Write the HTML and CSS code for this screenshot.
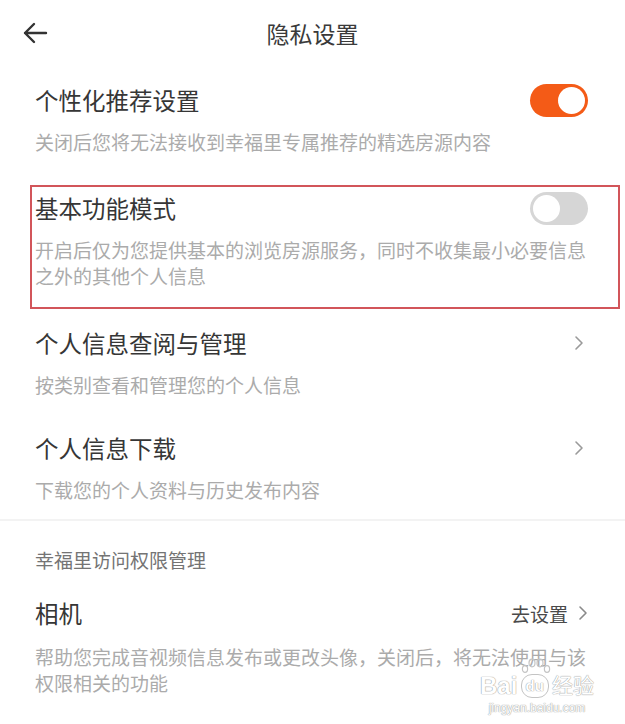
FILE: index.html
```html
<!DOCTYPE html>
<html lang="zh-CN">
<head>
    <meta charset="UTF-8">
    <meta name="viewport" content="width=device-width, initial-scale=1.0">
    <title>隐私设置</title>
    <link rel="stylesheet" href="styles.css">
</head>
<body>

    <!-- Top bar -->
    <div class="topbar">
        <svg class="back" width="26" height="22" viewBox="0 0 26 22">
            <path d="M24 11 H3 M12 2 L3 11 L12 20" fill="none" stroke="#333" stroke-width="2.4" stroke-linecap="round" stroke-linejoin="round"/>
        </svg>
        <div class="topbar-title">隐私设置</div>
    </div>

    <div class="list">
        <div class="item">
            <div class="item-head">
                <span class="item-title">个性化推荐设置</span>
                <span class="switch on"><span class="knob"></span></span>
            </div>
            <div class="item-desc">关闭后您将无法接收到幸福里专属推荐的精选房源内容</div>
        </div>

        <!-- Marked item -->
        <div class="item marked">
            <div class="item-head">
                <span class="item-title">基本功能模式</span>
                <span class="switch"><span class="knob"></span></span>
            </div>
            <div class="item-desc">开启后仅为您提供基本的浏览房源服务，同时不收集最小必要信息之外的其他个人信息</div>
        </div>

        <div class="item">
            <div class="item-head">
                <span class="item-title">个人信息查阅与管理</span>
                <svg class="chevron" width="10" height="16" viewBox="0 0 10 16"><path d="M2 2 L8 8 L2 14" fill="none" stroke="#9a9a9a" stroke-width="1.6" stroke-linecap="round" stroke-linejoin="round"/></svg>
            </div>
            <div class="item-desc">按类别查看和管理您的个人信息</div>
        </div>

        <div class="item">
            <div class="item-head">
                <span class="item-title">个人信息下载</span>
                <svg class="chevron" width="10" height="16" viewBox="0 0 10 16"><path d="M2 2 L8 8 L2 14" fill="none" stroke="#9a9a9a" stroke-width="1.6" stroke-linecap="round" stroke-linejoin="round"/></svg>
            </div>
            <div class="item-desc">下载您的个人资料与历史发布内容</div>
        </div>
    </div>

    <div class="divider"></div>

    <div class="list">
        <div class="group-title">幸福里访问权限管理</div>
        <div class="item perm">
            <div class="item-head">
                <span class="item-title">相机</span>
                <span class="action">去设置
                    <svg class="chevron" width="10" height="16" viewBox="0 0 10 16"><path d="M2 2 L8 8 L2 14" fill="none" stroke="#8a8a8a" stroke-width="1.6" stroke-linecap="round" stroke-linejoin="round"/></svg>
                </span>
            </div>
            <div class="item-desc">帮助您完成音视频信息发布或更改头像，关闭后，将无法使用与该权限相关的功能</div>
        </div>
    </div>

    <!-- Watermark -->
    <div class="watermark">
        <div class="wm-logo">
            <span>Bai</span>
            <span class="wm-du">
                <svg class="toes" width="30" height="16" viewBox="0 0 30 16" fill="none" stroke="#c4c4c4" stroke-width="1.2">
                    <ellipse cx="4" cy="11" rx="2.6" ry="3.4"/>
                    <ellipse cx="11" cy="5" rx="3" ry="3.8"/>
                    <ellipse cx="19" cy="5" rx="3" ry="3.8"/>
                    <ellipse cx="26" cy="11" rx="2.6" ry="3.4"/>
                </svg>
                du
            </span>
            <span class="wm-cn">经验</span>
        </div>
        <div class="wm-url">jingyan.baidu.com</div>
    </div>

</body>
</html>
```

FILE: styles.css
```css
body {
    margin: 0;
    padding: 0;
    background-color: #fff;
    font-family: "Noto Sans CJK SC", "Noto Sans", sans-serif;
    color: #333;
    position: relative;
    width: 625px;
    height: 724px;
    overflow: hidden;
}

/* Top bar */
.topbar {
    height: 66px;
    display: flex;
    align-items: center;
    justify-content: center;
    position: relative;
}

.back {
    position: absolute;
    left: 22px;
    top: 22px;
}

.topbar-title {
    font-size: 23px;
    line-height: 34px;
    color: #3a3a3a;
}

/* Items */
.item {
    padding: 17px 37px 16px 35px;
}

.item-head {
    display: flex;
    align-items: center;
    justify-content: space-between;
    height: 34px;
}

.item-title {
    font-size: 23.5px;
    line-height: 34px;
    color: #363636;
}

.item-desc {
    margin-top: 12px;
    font-size: 19px;
    line-height: 26px;
    color: #ababab;
}

.item.marked {
    margin: 14px 5px 0 30px;
    padding: 4px 30px 18px 3px;
    border: 2px solid #d2555a;
}

.chevron {
    margin-right: 4px;
}

/* Switch */
.switch {
    width: 58px;
    height: 33px;
    border-radius: 17px;
    background-color: #d6d6d6;
    display: flex;
    align-items: center;
    padding: 0 3px;
    box-sizing: border-box;
}

.switch .knob {
    width: 27px;
    height: 27px;
    border-radius: 50%;
    background-color: #fff;
}

.switch.on {
    background-color: #f45b17;
    justify-content: flex-end;
}

.divider {
    height: 2px;
    background-color: #f3f3f3;
}

.group-title {
    padding: 26px 35px 0;
    font-size: 19px;
    line-height: 26px;
    color: #747474;
}

.item.perm {
    padding-top: 23px;
}

.item.perm .item-desc {
    margin-top: 14px;
}

.action {
    display: flex;
    align-items: center;
    gap: 10px;
    font-size: 19px;
    color: #4a4a4a;
}

.action .chevron {
    margin-right: 0;
}

/* Watermark overlay */
.watermark {
    position: absolute;
    right: 31px;
    bottom: 8px;
    width: 114px;
    text-align: center;
    color: #fff;
    text-shadow: 0 0 1px #999, 0 0 1px #999;
    font-family: "Liberation Sans", "Noto Sans CJK SC", sans-serif;
}

.wm-logo {
    display: flex;
    align-items: flex-end;
    justify-content: space-between;
    font-size: 24px;
    line-height: 28px;
    font-weight: bold;
}

.wm-du {
    position: relative;
    font-size: 15px;
    line-height: 22px;
    padding: 0 4px;
    margin-bottom: 2px;
    border: 1.2px solid #c4c4c4;
    border-radius: 11px;
}

.toes {
    position: absolute;
    left: -1px;
    top: -17px;
}

.wm-cn {
    font-size: 21px;
    font-weight: normal;
}

.wm-url {
    font-size: 12px;
    line-height: 16px;
}
```
